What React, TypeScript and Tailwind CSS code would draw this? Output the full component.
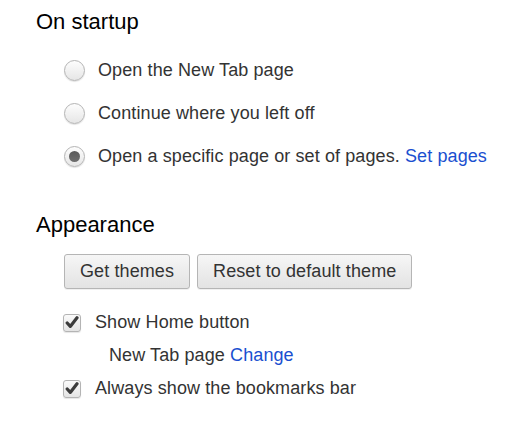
import React from 'react';

const Radio = ({ checked }: { checked?: boolean }) => (
  <span className="w-[21px] h-[21px] rounded-full border border-[#b4b4b4] bg-gradient-to-b from-[#fdfdfd] to-[#e6e6e6] shadow-[0_1px_1px_rgba(0,0,0,0.12)] flex items-center justify-center shrink-0">
    {checked && <span className="w-[11px] h-[11px] rounded-full bg-gradient-to-b from-[#5a5a5a] to-[#6e6e6e]" />}
  </span>
);

const Checkbox = () => (
  <span className="w-[18px] h-[18px] rounded-[3px] border border-[#b4b4b4] bg-gradient-to-b from-[#fbfbfb] to-[#e4e4e4] shadow-[0_1px_1px_rgba(0,0,0,0.1)] flex items-center justify-center shrink-0">
    <svg width="14" height="13" viewBox="0 0 14 13">
      <path d="M2.2 7 L5.3 10.4 L12 1.8" fill="none" stroke="#3c3c3c" strokeWidth="3.2" strokeLinecap="round" strokeLinejoin="round" />
    </svg>
  </span>
);

const Button = ({ children }: { children: React.ReactNode }) => (
  <button className="h-[35px] px-[15px] rounded-[3px] border border-[#b5b5b5] bg-gradient-to-b from-[#f6f6f6] to-[#e3e3e3] text-[18px] tracking-[0.1px] text-[#333] shadow-[0_1px_0_rgba(0,0,0,0.06)]">
    {children}
  </button>
);

export default function App() {
  return (
    <div
      className="w-[517px] h-[438px] bg-white pl-[36px] pt-[11px] text-[#333] flex flex-col"
      style={{ fontFamily: '"Liberation Sans", Arial, sans-serif' }}
    >
      <h3 className="text-[22px] leading-[22px] text-black">On startup</h3>

      <div className="mt-[16px] pl-[28px] flex flex-col text-[18px] tracking-[0.1px]">
        <label className="h-[43px] flex items-center gap-[13px]">
          <Radio />
          <span>Open the New Tab page</span>
        </label>
        <label className="h-[43px] flex items-center gap-[13px]">
          <Radio />
          <span>Continue where you left off</span>
        </label>
        <label className="h-[43px] flex items-center gap-[13px]">
          <Radio checked />
          <span>
            Open a specific page or set of pages. <a className="text-[#1a4fd0]">Set pages</a>
          </span>
        </label>
      </div>

      <h3 className="mt-[36px] text-[22px] leading-[22px] text-black">Appearance</h3>

      <div className="mt-[18px] pl-[28px] flex gap-[7px]">
        <Button>Get themes</Button>
        <Button>Reset to default theme</Button>
      </div>

      <div className="mt-[17px] pl-[27px] flex flex-col text-[18px] tracking-[0.1px]">
        <label className="h-[33px] flex items-center gap-[14px]">
          <Checkbox />
          <span>Show Home button</span>
        </label>
        <div className="h-[33px] flex items-center pl-[46px]">
          <span>
            New Tab page <a className="text-[#1a4fd0]">Change</a>
          </span>
        </div>
        <label className="h-[33px] flex items-center gap-[14px]">
          <Checkbox />
          <span>Always show the bookmarks bar</span>
        </label>
      </div>
    </div>
  );
}
